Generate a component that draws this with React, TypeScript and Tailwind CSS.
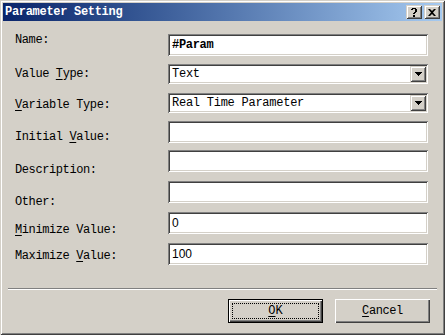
import React from "react";

const sunken =
  "shadow-[inset_1px_1px_0_#808080,inset_-1px_-1px_0_#ffffff,inset_2px_2px_0_#404040,inset_-2px_-2px_0_#d4d0c8]";
const raisedSmall =
  "shadow-[inset_1px_1px_0_#d4d0c8,inset_-1px_-1px_0_#404040,inset_2px_2px_0_#ffffff,inset_-2px_-2px_0_#808080]";
const mono = "font-['Liberation_Mono',monospace]";

function U({ children }: { children: React.ReactNode }) {
  return <span className="underline underline-offset-[2px]">{children}</span>;
}

function TextField({ value, bold, sans }: { value?: string; bold?: boolean; sans?: boolean }) {
  return (
    <div className={`h-[22px] bg-white ${sunken} flex items-center pl-[4px]`}>
      {value ? (
        <span
          className={
            sans
              ? "font-['Liberation_Sans',sans-serif] text-[12px] text-black leading-none"
              : `${mono} text-[12px] font-bold tracking-[-0.3px] text-black leading-none`
          }
        >
          {value}
        </span>
      ) : null}
    </div>
  );
}

function Combo({ value }: { value: string }) {
  return (
    <div className={`h-[20px] bg-white ${sunken} flex items-center pl-[4px] pr-[2px]`}>
      <span className={`${mono} text-[12px] tracking-[-0.25px] text-black leading-none flex-1`}>{value}</span>
      <div className={`w-[16px] h-[16px] bg-[#d4d0c8] ${raisedSmall} flex items-center justify-center`}>
        <svg width="7" height="4" viewBox="0 0 7 4">
          <path d="M0 0h7v1h-1v1h-1v1h-1v1h-1v-1h-1v-1h-1v-1h-1z" fill="#000" />
        </svg>
      </div>
    </div>
  );
}

export default function App() {
  return (
    <div className="w-[445px] h-[335px] bg-[#d4d0c8] p-[3px] flex flex-col shadow-[inset_1px_1px_0_#d4d0c8,inset_-1px_-1px_0_#404040,inset_2px_2px_0_#ffffff,inset_-2px_-2px_0_#808080]">
      {/* Title bar */}
      <div className="h-[18px] bg-gradient-to-r from-[#0a246a] to-[#a6caf0] flex items-center pl-[2px] pr-[2px]">
        <span className={`${mono} text-[12px] font-bold text-white tracking-[-0.3px] leading-none flex-1`}>
          Parameter Setting
        </span>
        <div className="flex gap-[2px]">
          <div className={`w-[16px] h-[14px] bg-[#d4d0c8] ${raisedSmall} flex items-center justify-center`}>
            <svg width="8" height="9" viewBox="0 0 8 9">
              <path
                d="M1 1h1v-1h4v1h1v3h-1v1h-1v1h-2v-1h1v-1h1v-3h-2v1h-2z M3 7h2v2h-2z"
                fill="#000"
              />
            </svg>
          </div>
          <div className={`w-[16px] h-[14px] bg-[#d4d0c8] ${raisedSmall} flex items-center justify-center`}>
            <svg width="8" height="7" viewBox="0 0 8 7">
              <path
                d="M0 0h2l2 2l2 -2h2l-3 3.5l3 3.5h-2l-2 -2l-2 2h-2l3 -3.5z"
                fill="#000"
              />
            </svg>
          </div>
        </div>
      </div>

      {/* Body */}
      <div className="flex flex-1 pl-[12px] pr-[14px]">
        <div className={`${mono} text-[12px] leading-[14px] tracking-[-0.4px] text-black flex flex-col w-[153px]`}>
          <div className="mt-[12px]">Name:</div>
          <div className="mt-[20px]">
            Value <U>T</U>ype:
          </div>
          <div className="mt-[17px]">
            <U>V</U>ariable Type:
          </div>
          <div className="mt-[18px]">
            Initial <U>V</U>alue:
          </div>
          <div className="mt-[19px]">Description:</div>
          <div className="mt-[18px]">Other:</div>
          <div className="mt-[14px]">
            <U>M</U>inimize Value:
          </div>
          <div className="mt-[12px]">
            Maximize <U>V</U>alue:
          </div>
        </div>
        <div className="flex flex-col flex-1 pt-[13px]">
          <TextField value="#Param" bold />
          <div className="mt-[8px]">
            <Combo value="Text" />
          </div>
          <div className="mt-[9px]">
            <Combo value="Real Time Parameter" />
          </div>
          <div className="mt-[8px]">
            <TextField />
          </div>
          <div className="mt-[7px]">
            <TextField />
          </div>
          <div className="mt-[9px]">
            <TextField />
          </div>
          <div className="mt-[9px]">
            <TextField value="0" sans />
          </div>
          <div className="mt-[9px]">
            <TextField value="100" sans />
          </div>
        </div>
      </div>

      {/* Separator */}
      <div className="mx-[5px] h-[2px] border-t border-t-[#808080] border-b border-b-white" />

      {/* Buttons */}
      <div className="flex justify-end gap-[12px] pr-[12px] pt-[9px] pb-[9px]">
        <div className="w-[95px] h-[24px] border border-black bg-[#d4d0c8] p-0">
          <div className="w-full h-full shadow-[inset_1px_1px_0_#ffffff,inset_-1px_-1px_0_#404040,inset_-2px_-2px_0_#808080] flex items-center justify-center p-[3px]">
            <div className={`w-full h-full border border-dotted border-black flex items-center justify-center ${mono} text-[12px] text-black leading-none`}>
              <U>O</U>K
            </div>
          </div>
        </div>
        <div className={`w-[95px] h-[24px] bg-[#d4d0c8] shadow-[inset_1px_1px_0_#ffffff,inset_-1px_-1px_0_#404040,inset_-2px_-2px_0_#808080] flex items-center justify-center ${mono} text-[12px] tracking-[-0.4px] text-black leading-none`}>
          <U>C</U>ancel
        </div>
      </div>
    </div>
  );
}
